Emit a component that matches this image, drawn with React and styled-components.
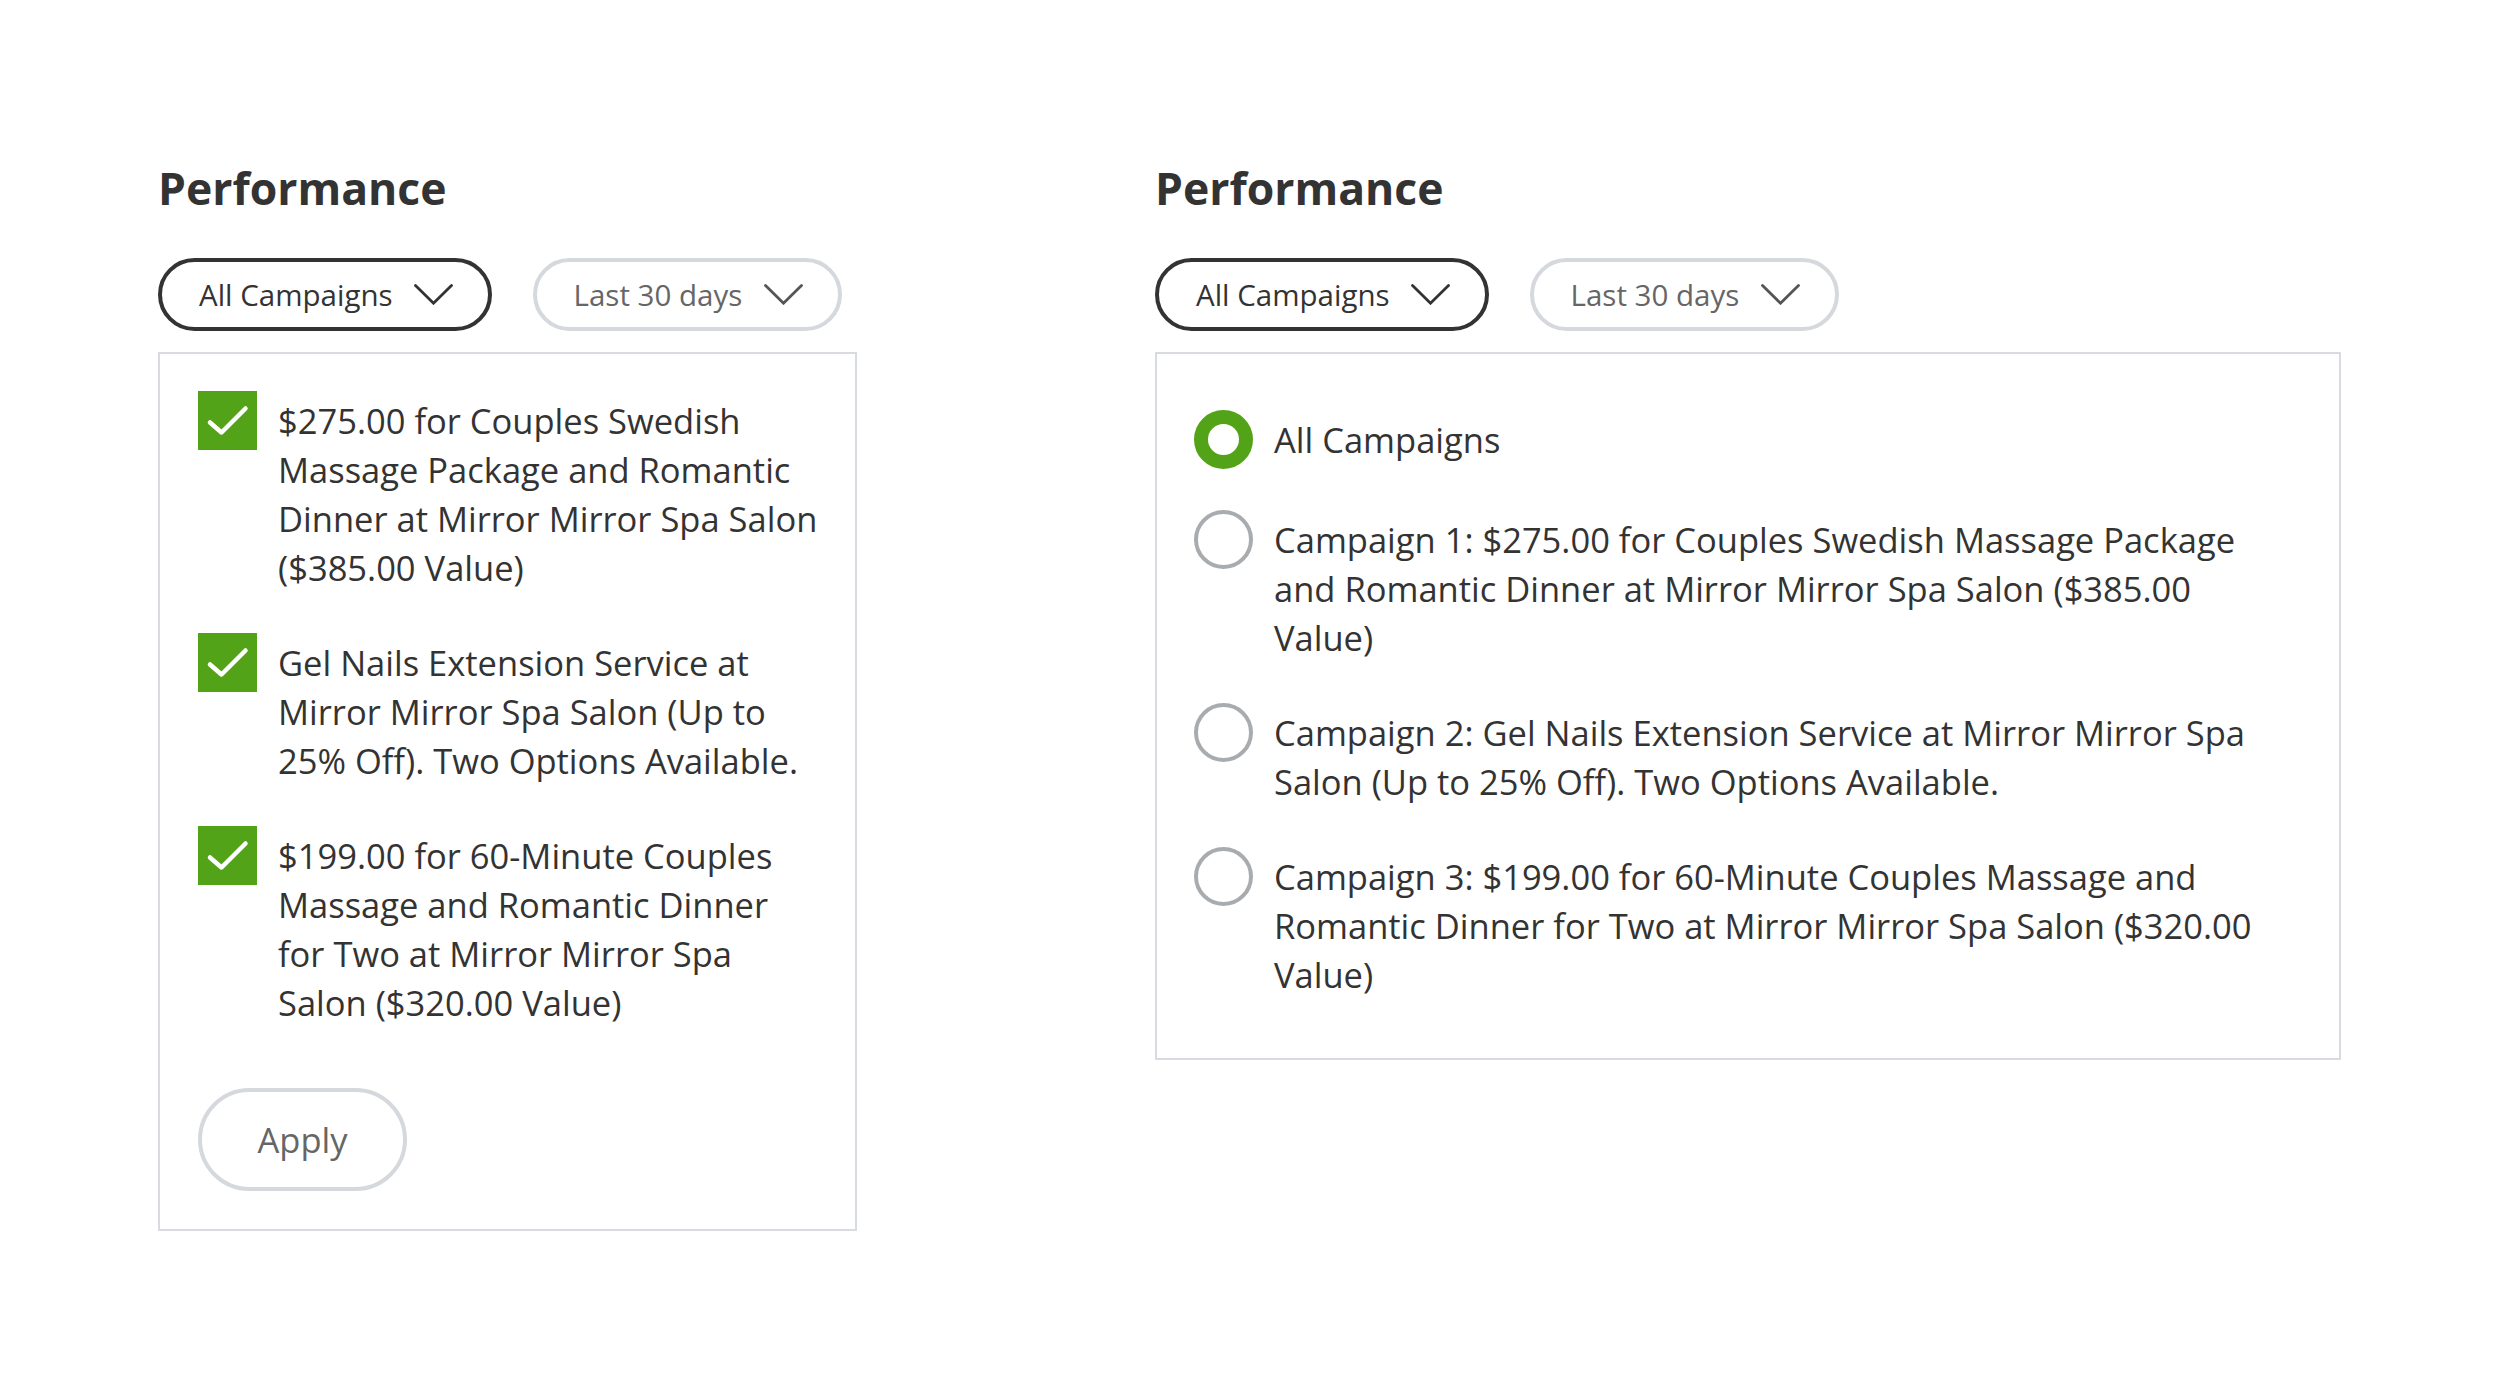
import React from "react";
import styled, { createGlobalStyle } from "styled-components";

const GlobalStyle = createGlobalStyle`
  html, body {
    margin: 0;
    padding: 0;
    background: #ffffff;
  }
  body {
    font-family: "Open Sans", "Noto Sans", sans-serif;
    color: #333333;
  }
  * { box-sizing: border-box; }
`;

const Page = styled.div`
  display: flex;
  align-items: flex-start;
  gap: 298px;
  padding: 158px 0 0 158px;
  width: 2500px;
  min-height: 1390px;
`;

const Column = styled.section`
  display: flex;
  flex-direction: column;
  align-items: flex-start;
  width: ${(p) => p.$width}px;
  flex-shrink: 0;
`;

const Title = styled.h2`
  margin: 0 0 40px;
  font-size: 44.5px;
  line-height: 60px;
  font-weight: 700;
  color: #333333;
`;

const Filters = styled.div`
  display: flex;
  gap: 41px;
  margin-bottom: 21px;
`;

const Dropdown = styled.button`
  display: inline-flex;
  align-items: center;
  gap: ${(p) => (p.$active ? 21 : 22)}px;
  height: 73px;
  padding: 0 35px 0 37px;
  border: 4px solid ${(p) => (p.$active ? "#333333" : "#d5d8dc")};
  border-radius: 37px;
  background: #ffffff;
  font-family: "Open Sans", sans-serif;
  font-size: 29.5px;
  color: ${(p) => (p.$active ? "#333333" : "#666666")};
  cursor: pointer;
`;

const Panel = styled.div`
  width: 100%;
  border: 2px solid #d8dbdf;
  background: #ffffff;
  display: flex;
  flex-direction: column;
  align-items: flex-start;
  padding: ${(p) => p.$padding};
`;

const OptionList = styled.div`
  display: flex;
  flex-direction: column;
  gap: 41px;
  width: 100%;
`;

const Option = styled.label`
  display: flex;
  align-items: flex-start;
  gap: 21px;
  cursor: pointer;
`;

const OptionText = styled.span`
  margin-top: 5px;
  font-size: 34.5px;
  line-height: 49px;
  color: #333333;
  max-width: ${(p) => p.$max}px;
`;

const CheckBox = styled.span`
  width: 59px;
  height: 59px;
  flex-shrink: 0;
  background: #53a318;
  display: flex;
  align-items: center;
  justify-content: center;
`;

const Radio = styled.span`
  width: 59px;
  height: 59px;
  flex-shrink: 0;
  border-radius: 50%;
  background: #ffffff;
  border: ${(p) => (p.$checked ? "14.5px solid #53a318" : "4px solid #a9acaf")};
`;

const ApplyButton = styled.button`
  margin-top: 61px;
  width: 209px;
  height: 103px;
  border: 4px solid #d5d8dc;
  border-radius: 52px;
  background: #ffffff;
  font-family: "Open Sans", sans-serif;
  font-size: 34.5px;
  color: #666666;
  cursor: pointer;
`;

const Chevron = ({ color }) => (
  <svg width="39" height="21" viewBox="0 0 39 21" fill="none">
    <path
      d="M1.5 1.5 L19.5 19.2 L37.5 1.5"
      stroke={color}
      strokeWidth="2.8"
      strokeLinecap="round"
      strokeLinejoin="miter"
    />
  </svg>
);

const CheckMark = () => (
  <svg width="59" height="59" viewBox="0 0 59 59" fill="none">
    <path
      d="M12 31.5 L23.5 41.5 L47.5 17.5"
      stroke="#ffffff"
      strokeWidth="4.5"
      strokeLinecap="round"
      strokeLinejoin="round"
    />
  </svg>
);

const checkItems = [
  "$275.00 for Couples Swedish Massage Package and Romantic Dinner at Mirror Mirror Spa Salon ($385.00 Value)",
  "Gel Nails Extension Service at Mirror Mirror Spa Salon (Up to 25% Off). Two Options Available.",
  "$199.00 for 60-Minute Couples Massage and Romantic Dinner for Two at Mirror Mirror Spa Salon ($320.00 Value)",
];

const radioItems = [
  "All Campaigns",
  "Campaign 1: $275.00 for Couples Swedish Massage Package and Romantic Dinner at Mirror Mirror Spa Salon ($385.00 Value)",
  "Campaign 2: Gel Nails Extension Service at Mirror Mirror Spa Salon (Up to 25% Off). Two Options Available.",
  "Campaign 3: $199.00 for 60-Minute Couples Massage and Romantic Dinner for Two at Mirror Mirror Spa Salon ($320.00 Value)",
];

const FilterBar = () => (
  <Filters>
    <Dropdown $active>
      All Campaigns
      <Chevron color="#333333" />
    </Dropdown>
    <Dropdown>
      Last 30 days
      <Chevron color="#555555" />
    </Dropdown>
  </Filters>
);

export default function App() {
  return (
    <>
      <GlobalStyle />
      <Page>
        <Column $width={699}>
          <Title>Performance</Title>
          <FilterBar />
          <Panel $padding="37px 34px 38px 38px">
            <OptionList>
              {checkItems.map((t) => (
                <Option key={t}>
                  <CheckBox>
                    <CheckMark />
                  </CheckBox>
                  <OptionText $max={542}>{t}</OptionText>
                </Option>
              ))}
            </OptionList>
            <ApplyButton>Apply</ApplyButton>
          </Panel>
        </Column>
        <Column $width={1186}>
          <Title>Performance</Title>
          <FilterBar />
          <Panel $padding="56px 37px 59px 37px">
            <OptionList>
              {radioItems.map((t, i) => (
                <Option key={t}>
                  <Radio $checked={i === 0} />
                  <OptionText $max={1000}>{t}</OptionText>
                </Option>
              ))}
            </OptionList>
          </Panel>
        </Column>
      </Page>
    </>
  );
}
